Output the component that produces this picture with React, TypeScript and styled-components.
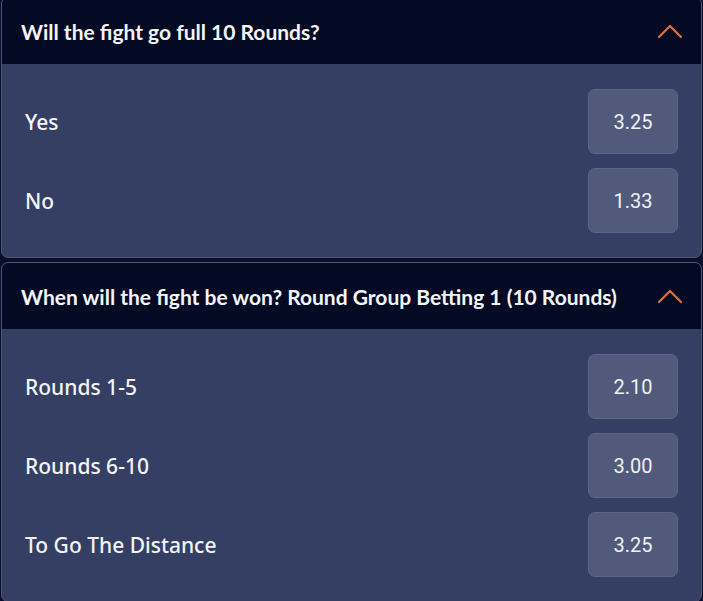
import styled, { createGlobalStyle } from "styled-components";

const GlobalStyle = createGlobalStyle`
  html, body {
    margin: 0;
    padding: 0;
    background: #0a0e29;
  }
  * { box-sizing: border-box; }
`;

const Page = styled.div`
  display: flex;
  flex-direction: column;
  gap: 4px;
  padding: 0 1px;
  margin-top: -3px;
`;

const Card = styled.section`
  border: 1px solid #4c5678;
  border-radius: 7px;
  overflow: hidden;
  background: #353f63;
`;

const Header = styled.div`
  display: flex;
  align-items: center;
  justify-content: space-between;
  height: 66px;
  padding: 0 18px 0 19px;
  background: #050a24;
`;

const Title = styled.h2`
  margin: 0;
  font-family: Lato, "Liberation Sans", sans-serif;
  font-weight: 700;
  font-size: 21px;
  color: #f4f5f8;
`;

const Chevron = () => (
  <svg width="26" height="16" viewBox="0 0 26 16" fill="none">
    <path
      d="M2 14 L13 3 L24 14"
      stroke="#e3703d"
      strokeWidth="2.2"
      strokeLinecap="round"
      strokeLinejoin="round"
    />
  </svg>
);

const Body = styled.div`
  display: flex;
  flex-direction: column;
  gap: 14px;
  padding: 25px 23px 24px 23px;
`;

const Row = styled.div`
  display: flex;
  align-items: center;
  justify-content: space-between;
`;

const Label = styled.span`
  font-family: "Noto Sans", "Open Sans", sans-serif;
  font-weight: 500;
  font-size: 21px;
  color: #f3f4f8;
`;

const Odds = styled.button`
  width: 90px;
  height: 65px;
  border: 1px solid #5d6586;
  border-radius: 7px;
  background: #525a7b;
  color: #eef0f5;
  font-family: Roboto, "Noto Sans", sans-serif;
  font-size: 20px;
  font-weight: 400;
  cursor: pointer;
`;

const markets = [
  {
    title: "Will the fight go full 10 Rounds?",
    options: [
      { name: "Yes", price: "3.25" },
      { name: "No", price: "1.33" },
    ],
  },
  {
    title: "When will the fight be won? Round Group Betting 1 (10 Rounds)",
    options: [
      { name: "Rounds 1-5", price: "2.10" },
      { name: "Rounds 6-10", price: "3.00" },
      { name: "To Go The Distance", price: "3.25" },
    ],
  },
];

export default function App() {
  return (
    <>
      <GlobalStyle />
      <Page>
        {markets.map((m) => (
          <Card key={m.title}>
            <Header>
              <Title>{m.title}</Title>
              <Chevron />
            </Header>
            <Body>
              {m.options.map((o) => (
                <Row key={o.name}>
                  <Label>{o.name}</Label>
                  <Odds>{o.price}</Odds>
                </Row>
              ))}
            </Body>
          </Card>
        ))}
      </Page>
    </>
  );
}
